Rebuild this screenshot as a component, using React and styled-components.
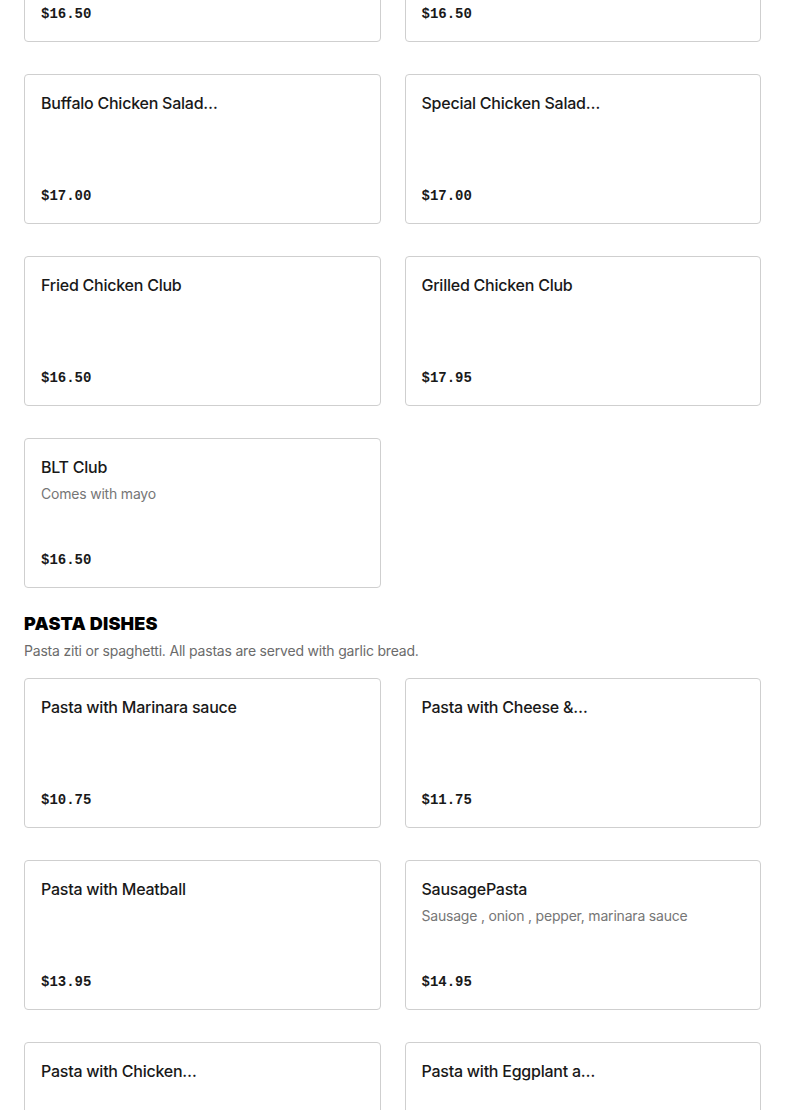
import React from "react";
import styled, { createGlobalStyle } from "styled-components";

const Global = createGlobalStyle`
  html, body { margin: 0; padding: 0; background: #ffffff; }
  body { font-family: Inter, "Liberation Sans", sans-serif; color: #191919; }
  * { box-sizing: border-box; }
`;

const Page = styled.div`
  padding: 0 24px;
  margin-top: -108px;
  display: flex;
  flex-direction: column;
`;

const Section = styled.section`
  display: flex;
  flex-direction: column;
  margin-top: ${(p) => (p.$first ? "0" : "24px")};
`;

const SectionTitle = styled.h2`
  margin: 0;
  font-family: Inter, "Liberation Sans", sans-serif;
  font-weight: 900;
  font-size: 18px;
  line-height: 24px;
  letter-spacing: 0.2px;
  text-transform: uppercase;
  color: #000;
`;

const SectionDesc = styled.p`
  margin: 5px 0 0;
  font-size: 14px;
  line-height: 20px;
  letter-spacing: -0.2px;
  color: #6b6b6b;
`;

const Grid = styled.div`
  display: grid;
  grid-template-columns: 1fr 1fr;
  column-gap: 24px;
  row-gap: 32px;
  margin-top: ${(p) => (p.$afterHeader ? "17px" : "0")};
`;

const Card = styled.div`
  height: 150px;
  border: 1px solid #cfcfcf;
  border-radius: 4px;
  padding: 16px 16px 15px;
  display: flex;
  flex-direction: column;
  background: #fff;
`;

const Name = styled.div`
  font-size: 16px;
  line-height: 24px;
  font-weight: 500;
  letter-spacing: -0.24px;
  color: #191919;
  white-space: nowrap;
  overflow: hidden;
`;

const Desc = styled.div`
  margin-top: 5px;
  font-size: 14px;
  line-height: 20px;
  letter-spacing: -0.2px;
  color: #767676;
`;

const Price = styled.div`
  margin-top: auto;
  font-family: "Liberation Mono", "DejaVu Sans Mono", monospace;
  font-weight: 700;
  font-size: 14px;
  line-height: 24px;
  color: #191919;
`;

const sandwiches = [
  { name: "Chicken Salad Club", price: "$16.50" },
  { name: "Tuna Salad Club", price: "$16.50" },
  { name: "Buffalo Chicken Salad…", price: "$17.00" },
  { name: "Special Chicken Salad…", price: "$17.00" },
  { name: "Fried Chicken Club", price: "$16.50" },
  { name: "Grilled Chicken Club", price: "$17.95" },
  { name: "BLT Club", desc: "Comes with mayo", price: "$16.50" },
];

const pastas = [
  { name: "Pasta with Marinara sauce", price: "$10.75" },
  { name: "Pasta with Cheese &…", price: "$11.75" },
  { name: "Pasta with Meatball", price: "$13.95" },
  { name: "SausagePasta", desc: "Sausage , onion , pepper, marinara sauce", price: "$14.95" },
  { name: "Pasta with Chicken…", price: "$14.95" },
  { name: "Pasta with Eggplant a…", price: "$14.95" },
];

function Item({ item }) {
  return (
    <Card>
      <Name>{item.name}</Name>
      {item.desc && <Desc>{item.desc}</Desc>}
      <Price>{item.price}</Price>
    </Card>
  );
}

export default function App() {
  return (
    <>
      <Global />
      <Page>
        <Section $first>
          <Grid>
            {sandwiches.map((it, i) => (
              <Item key={i} item={it} />
            ))}
          </Grid>
        </Section>
        <Section>
          <SectionTitle>Pasta Dishes</SectionTitle>
          <SectionDesc>Pasta ziti or spaghetti. All pastas are served with garlic bread.</SectionDesc>
          <Grid $afterHeader>
            {pastas.map((it, i) => (
              <Item key={i} item={it} />
            ))}
          </Grid>
        </Section>
      </Page>
    </>
  );
}
